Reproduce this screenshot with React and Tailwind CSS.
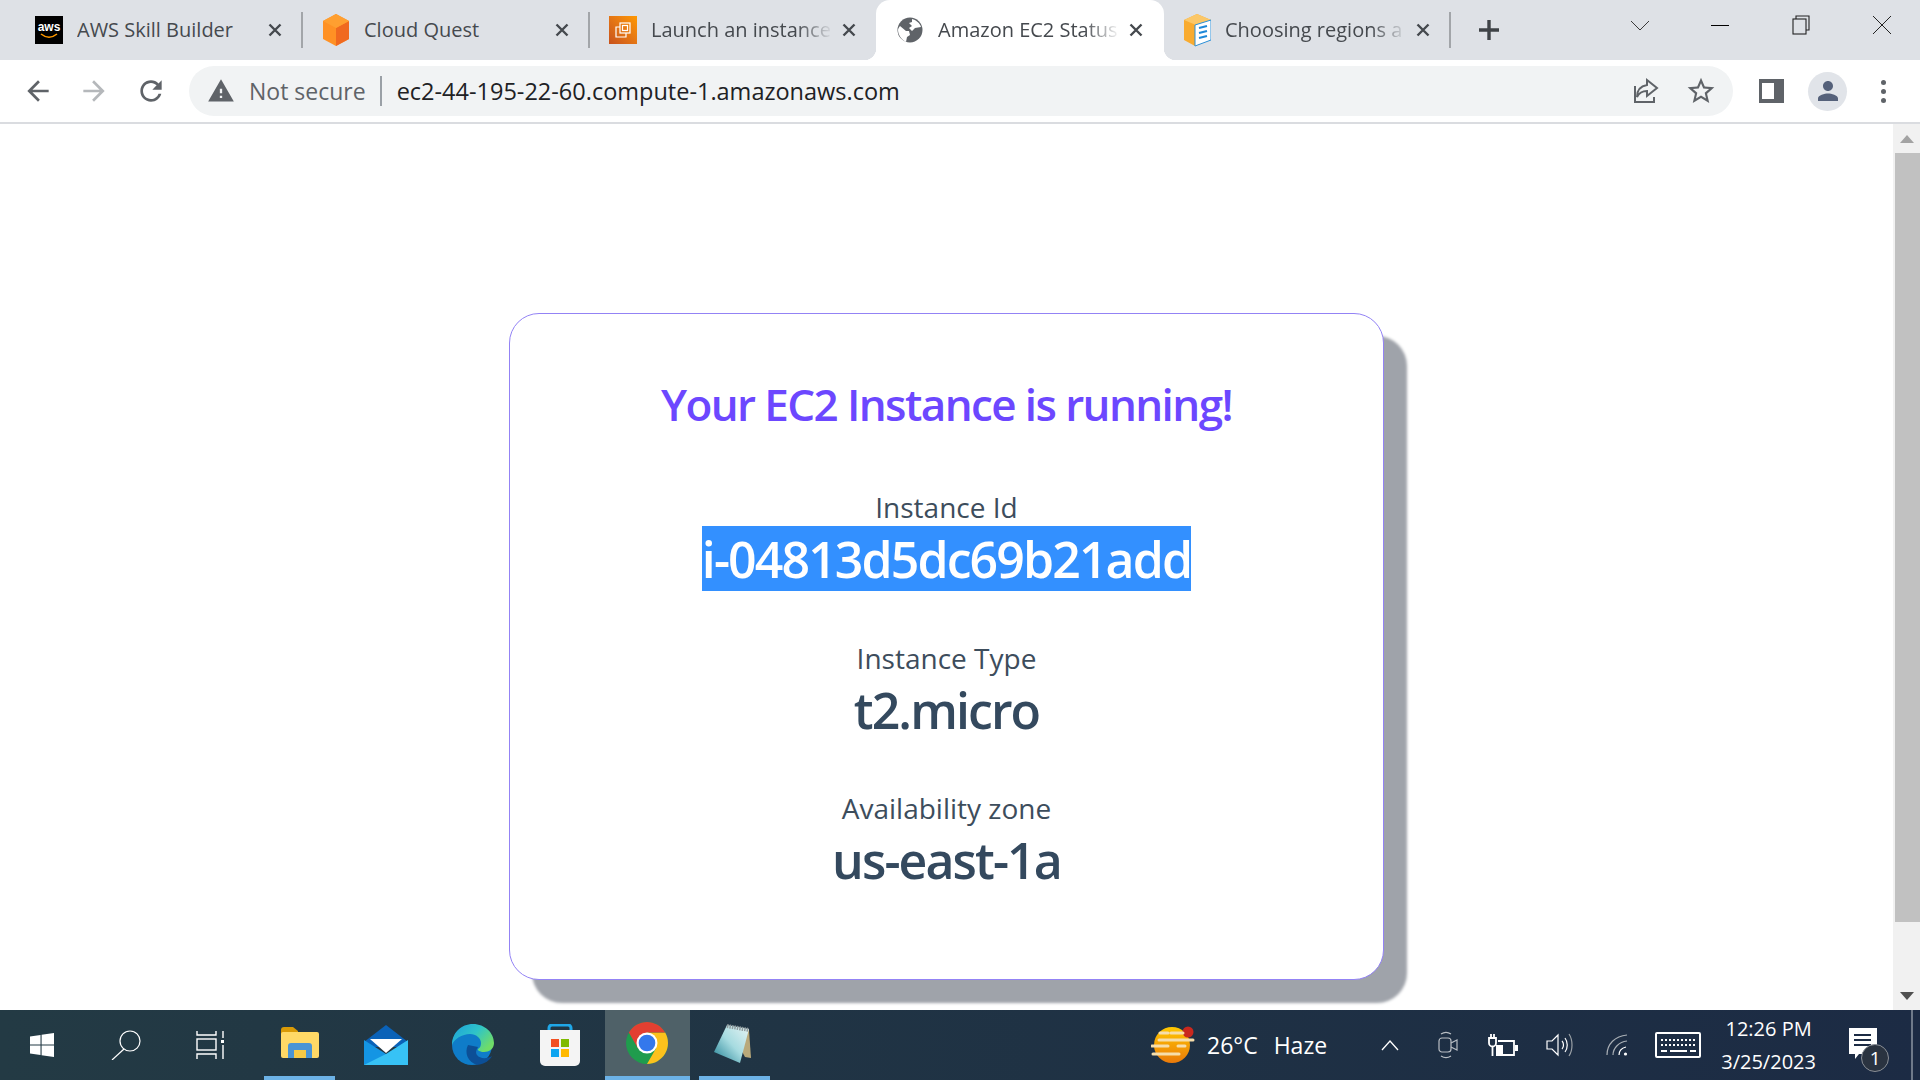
const uiFont = "font-['Open_Sans','Noto_Sans',sans-serif]"

function AwsIcon() {
  return (
    <div className="w-7 h-7 bg-black flex flex-col items-center justify-center shrink-0">
      <span className="text-white text-[12px] font-bold leading-[11px] font-['Liberation_Sans',sans-serif]">aws</span>
      <svg width="20" height="6" viewBox="0 0 20 6"><path d="M2 1c5 4 11 4 16 0" stroke="#f90" strokeWidth="1.6" fill="none" /></svg>
    </div>
  )
}

function CubeIcon() {
  return (
    <svg width="28" height="34" viewBox="0 0 28 34" className="shrink-0">
      <path d="M14 1l13 7v18l-13 7-13-7V8z" fill="#ff9124" />
      <path d="M14 15l13-7v18l-13 7z" fill="#f0691f" />
      <path d="M14 1l13 7-13 7L1 8z" fill="#ff9f30" />
    </svg>
  )
}

function InstanceIcon() {
  return (
    <div className="w-7 h-7 bg-gradient-to-tr from-[#c8511b] to-[#ff9900] flex items-center justify-center shrink-0">
      <svg width="20" height="20" viewBox="0 0 20 20" fill="none" stroke="#fff" strokeWidth="1.2">
        <rect x="7" y="3" width="10" height="10" />
        <rect x="9.5" y="5.5" width="5" height="5" />
        <path d="M7 7H3v10h10v-4" />
      </svg>
    </div>
  )
}

function GlobeIcon() {
  return (
    <svg width="26" height="26" viewBox="0 0 26 26" className="shrink-0">
      <circle cx="13" cy="13" r="12.5" fill="#5f6368" />
      <path d="M3 9l6 5 3 0 1 4-3 2-1 5C5 23 1 18 1 13c0-1 1-3 2-4zM15 2c4 1 8 4 9 8l-6 1-3 3-3-3 3-2-3-3 3-1z" fill="#fff" />
    </svg>
  )
}

function BoxIcon() {
  return (
    <svg width="28" height="34" viewBox="0 0 28 34" className="shrink-0">
      <path d="M14 1L1 7v20l11 6V12l16-5z" fill="#f9ab2f" />
      <path d="M14 1l14 6-15 5L1 7z" fill="#fbc768" />
      <path d="M12 12l16-5v20l-16 6z" fill="#fff" stroke="#2a8fd6" strokeWidth="1" />
      <path d="M16 15l8-2M16 20l8-2M16 25l8-2" stroke="#1e88d8" strokeWidth="2.2" />
    </svg>
  )
}

const tabs = [
  { title: 'AWS Skill Builder', icon: AwsIcon },
  { title: 'Cloud Quest', icon: CubeIcon },
  { title: 'Launch an instance', icon: InstanceIcon, fade: true, noSep: true },
  { title: 'Amazon EC2 Status', icon: GlobeIcon, fade: true, active: true, noSep: true },
  { title: 'Choosing regions a', icon: BoxIcon, fade: true },
]

function Tab({ title, icon: Icon, fade, active, noSep }) {
  return (
    <div className={`relative h-[60px] flex items-center shrink-0 ${active ? 'w-[288px] -ml-[1px] pl-[20px] bg-white rounded-t-[14px]' : 'w-[287px] pl-[19px]'}`}>
      {active && <div className="absolute -left-[12px] bottom-0 w-[12px] h-[12px] bg-[radial-gradient(circle_at_0_0,#dee1e6_12px,#fff_12.5px)]" />}
      {active && <div className="absolute -right-[12px] bottom-0 w-[12px] h-[12px] bg-[radial-gradient(circle_at_100%_0,#dee1e6_12px,#fff_12.5px)]" />}
      <div className="w-[28px] flex justify-center shrink-0"><Icon /></div>
      <div className={`ml-[14px] w-[182px] shrink-0 overflow-hidden whitespace-nowrap text-[20px] text-[#45494e] ${fade ? '[mask-image:linear-gradient(to_right,black_80%,transparent_100%)]' : ''}`}>{title}</div>
      <svg width="14" height="14" viewBox="0 0 14 14" className="ml-[9px] shrink-0"><path d="M1.5 1.5l11 11M12.5 1.5l-11 11" stroke="#45494e" strokeWidth="2.4" /></svg>
      {!noSep && <div className="ml-auto w-[2px] h-[36px] bg-[#a2a5a9]" />}
    </div>
  )
}

function TabStrip() {
  return (
    <div className="h-[60px] bg-[#dee1e6] flex items-center pl-[16px] shrink-0">
      {tabs.map(t => <Tab key={t.title} {...t} />)}
      <svg width="24" height="24" viewBox="0 0 24 24" className="ml-[26px]"><path d="M12 2v20M2 12h20" stroke="#3f4347" strokeWidth="3.4" /></svg>
      <svg width="20" height="12" viewBox="0 0 20 12" className="ml-[129px] -mt-[8px]"><path d="M1 1l9 9 9-9" stroke="#3a3a3a" strokeWidth="1" fill="none" /></svg>
      <div className="ml-[61px] w-[18px] h-[1px] bg-black -mt-[10px]" />
      <svg width="18" height="20" viewBox="0 0 18 20" className="ml-[63px] -mt-[10px]" fill="none" stroke="#222" strokeWidth="1.1"><rect x="1" y="4" width="13" height="15" /><path d="M4 4V1h13v14h-3" /></svg>
      <svg width="20" height="20" viewBox="0 0 20 20" className="ml-[62px] -mt-[10px]"><path d="M1 1l18 18M19 1L1 19" stroke="#222" strokeWidth="1" /></svg>
    </div>
  )
}

function Toolbar() {
  return (
    <div className="h-[64px] bg-white border-b-2 border-[#dadce0] flex items-center pl-[22px] shrink-0">
      <svg width="32" height="32" viewBox="0 0 24 24" fill="#5f6368"><path d="M20 11H7.83l5.59-5.59L12 4l-8 8 8 8 1.41-1.41L7.83 13H20v-2z" /></svg>
      <svg width="32" height="32" viewBox="0 0 24 24" fill="#b5b8bb" className="ml-[24px]"><path d="M12 4l-1.41 1.41L16.17 11H4v2h12.17l-5.58 5.59L12 20l8-8z" /></svg>
      <svg width="32" height="32" viewBox="0 0 24 24" fill="#5f6368" className="ml-[25px]"><path d="M17.65 6.35C16.2 4.9 14.21 4 12 4c-4.42 0-7.99 3.58-7.99 8s3.57 8 7.99 8c3.73 0 6.84-2.55 7.73-6h-2.08c-.82 2.33-3.04 4-5.65 4-3.31 0-6-2.69-6-6s2.69-6 6-6c1.66 0 3.14.69 4.22 1.78L13 11h7V4l-2.35 2.35z" /></svg>
      <div className="ml-[22px] w-[1544px] h-[50px] rounded-full bg-[#f1f3f4] flex items-center pl-[18px]">
        <svg width="28" height="28" viewBox="0 0 24 24" fill="#5f6368"><path d="M1 21h22L12 2 1 21zm12-3h-2v-2h2v2zm0-4h-2v-4h2v4z" /></svg>
        <span className="ml-[14px] text-[23px] text-[#5f6368] leading-none">Not secure</span>
        <div className="ml-[14px] w-[2px] h-[30px] bg-[#9aa0a6]" />
        <span className="ml-[15px] mt-[1px] text-[23.5px] text-[#202124] leading-none">ec2-44-195-22-60.compute-1.amazonaws.com</span>
        <svg width="28" height="28" viewBox="0 0 28 28" fill="none" stroke="#5f6368" strokeWidth="2" className="ml-auto"><path d="M15 3l10 8-10 8v-5c-5 0-8 2-10 6 0-7 4-11 10-12z" /><path d="M3 9v16h19v-5" /></svg>
        <svg width="32" height="32" viewBox="0 0 24 24" fill="#5f6368" className="ml-[25px] mr-[16px]"><path d="M22 9.24l-7.19-.62L12 2 9.19 8.63 2 9.24l5.46 4.73L5.82 21 12 17.27 18.18 21l-1.63-7.03L22 9.24zM12 15.4l-3.76 2.27 1-4.28-3.32-2.88 4.38-.38L12 6.1l1.71 4.04 4.38.38-3.32 2.88 1 4.28L12 15.4z" /></svg>
      </div>
      <div className="ml-[26px] w-[25px] h-[24px] bg-[#5f6368] pl-[3px] py-[4px] pr-[10px]"><div className="w-full h-full bg-white" /></div>
      <div className="ml-[24px] w-[39px] h-[39px] rounded-full bg-[#e1e4e9] flex items-center justify-center">
        <svg width="30" height="30" viewBox="0 0 24 24" fill="#55617a"><path d="M12 12c2.21 0 4-1.79 4-4s-1.79-4-4-4-4 1.79-4 4 1.79 4 4 4zm0 2c-2.67 0-8 1.34-8 4v2h16v-2c0-2.66-5.33-4-8-4z" /></svg>
      </div>
      <div className="ml-[34px] flex flex-col gap-[4px]">
        <div className="w-[5px] h-[5px] rounded-full bg-[#5f6368]" />
        <div className="w-[5px] h-[5px] rounded-full bg-[#5f6368]" />
        <div className="w-[5px] h-[5px] rounded-full bg-[#5f6368]" />
      </div>
    </div>
  )
}

function Info({ label, value, selected, className }) {
  return (
    <div className={`flex flex-col items-center ${className}`}>
      <div className="text-[28px] leading-[38px] text-[#3d4d5c]">{label}</div>
      <div className={`pt-[2px] text-[50px] leading-[63px] tracking-[-1.9px] font-semibold ${selected ? 'bg-[#3390ff] text-white' : 'text-[#34495e]'}`}>{value}</div>
    </div>
  )
}

function StatusCard() {
  return (
    <div className="mx-auto mt-[189px] w-[875px] h-[667px] rounded-[30px] border border-[#9383f5] bg-white shadow-[23px_23px_3px_#9fa3aa] flex flex-col items-center pt-[61px]">
      <h1 className="text-[44px] leading-[58px] tracking-[-1.6px] font-semibold text-[#6c47ff]">Your EC2 Instance is running!</h1>
      <Info label="Instance Id" value="i-04813d5dc69b21add" selected className="mt-[55px]" />
      <Info label="Instance Type" value="t2.micro" className="mt-[48px]" />
      <Info label="Availability zone" value="us-east-1a" className="mt-[47px]" />
    </div>
  )
}

function Scrollbar() {
  return (
    <div className="w-[27px] bg-[#f1f1f1] flex flex-col shrink-0">
      <div className="h-[29px] flex items-center justify-center pl-[1px]">
        <div className="w-0 h-0 border-x-[7px] border-x-transparent border-b-[8px] border-b-[#a3a3a3]" />
      </div>
      <div className="ml-[2px] h-[769px] bg-[#c1c1c1]" />
      <div className="flex-1 flex items-end justify-center pb-[10px] pl-[1px]">
        <div className="w-0 h-0 border-x-[7px] border-x-transparent border-t-[8px] border-t-[#505050]" />
      </div>
    </div>
  )
}

function WindowsIcon() {
  return (
    <svg width="24" height="24" viewBox="0 0 24 24" fill="#fff"><path d="M0 3.5l10.5-1.5v9.4H0zM11.6 1.8L24 0v11.4H11.6zM0 12.6h10.5V22L0 20.5zM11.6 12.6H24V24l-12.4-1.8z" /></svg>
  )
}

function SearchIcon() {
  return (
    <svg width="30" height="30" viewBox="0 0 30 30" fill="none" stroke="#fff" strokeWidth="1.2"><circle cx="19" cy="11" r="10" /><path d="M13 19L1 30" /></svg>
  )
}

function TaskViewIcon() {
  return (
    <svg width="28" height="28" viewBox="0 0 28 28" fill="none" stroke="#fff" strokeWidth="1.4"><path d="M1 0v4h19V0M1 28v-5h19v5" /><rect x="1" y="8" width="19" height="11" /><path d="M27 0v7M27 14v14" /><rect x="25" y="9" width="3" height="3" fill="#fff" stroke="none" /></svg>
  )
}

function ExplorerIcon() {
  return (
    <svg width="38" height="32" viewBox="0 0 38 32">
      <path d="M0 3a3 3 0 0 1 3-3h9l5 4v6H0z" fill="#d99a06" />
      <rect x="0" y="5" width="38" height="26" rx="2" fill="#ffd966" />
      <path d="M7 31V19a3 3 0 0 1 3-3h18a3 3 0 0 1 3 3v12h-6v-8H13v8z" fill="#4a94d4" />
      <rect x="13" y="23" width="12" height="8" fill="#f6c945" />
    </svg>
  )
}

function MailIcon() {
  return (
    <svg width="44" height="40" viewBox="0 0 44 40">
      <path d="M22 0l22 17v5H0v-5z" fill="#0a62b8" />
      <path d="M6 14h32l-16 14z" fill="#fff" />
      <path d="M0 15l22 14v11H0z" fill="#1495e4" />
      <path d="M44 15L22 29 0 40h44z" fill="#37c2f5" />
    </svg>
  )
}

function EdgeIcon() {
  return (
    <svg width="42" height="42" viewBox="0 0 42 42">
      <defs>
        <linearGradient id="edgeTop" x1="0" y1="0" x2="1" y2="0.6"><stop offset="0" stopColor="#1c9fdc" /><stop offset="0.55" stopColor="#2fc4c8" /><stop offset="1" stopColor="#6fdc68" /></linearGradient>
      </defs>
      <circle cx="20" cy="21" r="20" fill="#0f7cc9" />
      <path d="M16 21c-4 8 0 17 9 20 8-1 13-5 15-9-5 3-12 3-15-1-2-3 0-6 1-8z" fill="#0c4f97" />
      <path d="M21 0c12 0 21 9 21 19 0 6-5 9-10 9-4 0-7-2-6-3 2-1 3-3 3-6 0-5-5-9-11-9C10 10 2 15 0 21 0 9 9 0 21 0z" fill="url(#edgeTop)" />
    </svg>
  )
}

function StoreIcon() {
  return (
    <svg width="40" height="42" viewBox="0 0 40 42">
      <path d="M9 12V4a3 3 0 0 1 3-3h16a3 3 0 0 1 3 3v8" fill="none" stroke="#1fa7e8" strokeWidth="3" />
      <path d="M0 6h40v31a5 5 0 0 1-5 5H5a5 5 0 0 1-5-5z" fill="#f4f4f4" />
      <rect x="11" y="15" width="8" height="8" fill="#f25022" />
      <rect x="21" y="15" width="8" height="8" fill="#7fba00" />
      <rect x="11" y="25" width="8" height="8" fill="#0ea5f0" />
      <rect x="21" y="25" width="8" height="8" fill="#ffb900" />
    </svg>
  )
}

function ChromeIcon() {
  return (
    <svg width="42" height="42" viewBox="0 0 48 48">
      <circle cx="24" cy="24" r="24" fill="#1f9c4d" />
      <path d="M44.78 12A24 24 0 0 1 24 48l10.39-18L24 12z" fill="#fcc11d" />
      <path d="M3.22 12A24 24 0 0 1 44.78 12H24L13.61 30z" fill="#e33f31" />
      <circle cx="24" cy="24" r="12" fill="#fff" />
      <circle cx="24" cy="24" r="9.5" fill="#3478ec" />
    </svg>
  )
}

function NotepadIcon() {
  return (
    <svg width="40" height="40" viewBox="0 0 40 40">
      <defs>
        <linearGradient id="padFill" x1="0" y1="1" x2="1" y2="0"><stop offset="0" stopColor="#1f7f93" /><stop offset="0.5" stopColor="#a6dbe0" /><stop offset="1" stopColor="#e8f4f4" /></linearGradient>
      </defs>
      <path d="M15 3l21 4 2 28-6-1z" fill="#b9a97a" />
      <path d="M14 2l22 4-9 34L1 29z" fill="url(#padFill)" />
      <path d="M14 3l22 4" stroke="#8f9a9d" strokeWidth="4" strokeDasharray="1.5 1" />
    </svg>
  )
}

function WeatherIcon() {
  return (
    <svg width="44" height="38" viewBox="0 0 44 38">
      <defs>
        <linearGradient id="sun" x1="0" y1="0" x2="0" y2="1"><stop offset="0" stopColor="#ffc800" /><stop offset="1" stopColor="#ea7a0a" /></linearGradient>
      </defs>
      <circle cx="21" cy="19" r="18" fill="url(#sun)" />
      <circle cx="37" cy="6" r="5.5" fill="#c9281e" />
      <path d="M9 7h8M20 7h12M8 14h34M1 20h16M27 20h7M2 28h26" stroke="#f6deab" strokeWidth="3" strokeLinecap="round" />
    </svg>
  )
}

function TrayIcons() {
  return (
    <div className="flex items-center">
      <svg width="18" height="11" viewBox="0 0 18 11" fill="none" stroke="#fff" strokeWidth="1.3"><path d="M1 10l8-9 8 9" /></svg>
      <svg width="20" height="28" viewBox="0 0 20 28" fill="none" stroke="#b9bec4" strokeWidth="1.2" className="ml-[39px]"><rect x="1" y="7" width="12" height="14" rx="3" /><path d="M13 12l6-3v10l-6-3M3 3c3-2 7-2 10 0M3 25c3 2 7 2 10 0" /></svg>
      <svg width="30" height="22" viewBox="0 0 30 22" fill="none" stroke="#fff" strokeWidth="1.8" className="ml-[30px]"><path d="M1 4h7v5a3.5 3.5 0 0 1-7 0zM3 0v4M6 0v4M4.5 13v9" /><path d="M10 7h16v14H8" /><rect x="8" y="11" width="7" height="10" fill="#fff" stroke="none" /><rect x="27" y="11" width="3" height="6" fill="#fff" stroke="none" /></svg>
      <svg width="27" height="24" viewBox="0 0 27 24" fill="none" stroke="#fff" strokeWidth="1.2" className="ml-[28px]"><path d="M1 8h5l6-6v20l-6-6H1z" /><path d="M16 8c2 2 2 6 0 8M19 5c3 4 3 10 0 14" /><path d="M23 1c4 6 4 16 0 22" stroke="#9aa0a6" /></svg>
      <svg width="22" height="22" viewBox="0 0 22 22" fill="none" stroke="#aab0b6" strokeWidth="1.2" className="ml-[33px]"><path d="M1 21C1 10 9 2 21 1M7 21c0-7 6-13 14-14" /><path d="M13 21c0-4 3-7 7-8" stroke="#fff" /><circle cx="19.5" cy="20" r="1.6" fill="#fff" stroke="none" /></svg>
      <svg width="46" height="26" viewBox="0 0 46 26" fill="none" stroke="#fff" className="ml-[27px]"><rect x="1" y="1" width="44" height="24" rx="1" strokeWidth="2" /><path d="M6 8h34M6 13h34" strokeWidth="2" strokeDasharray="2 2" /><path d="M6 19h6M15 19h17M35 19h6" strokeWidth="2" /></svg>
    </div>
  )
}

function Taskbar() {
  return (
    <div className="relative h-[70px] bg-gradient-to-r from-[#233a44] to-[#1c2b44] flex items-center shrink-0 text-white">
      <div className="ml-[30px] w-[24px] flex justify-center"><WindowsIcon /></div>
      <div className="ml-[57px]"><SearchIcon /></div>
      <div className="ml-[55px]"><TaskViewIcon /></div>
      <div className="ml-[40px] w-[71px] h-full flex items-center justify-center border-b-4 border-[#6cb2e6]"><ExplorerIcon /></div>
      <div className="ml-[15px] w-[71px] flex justify-center"><MailIcon /></div>
      <div className="ml-[16px] w-[71px] flex justify-center"><EdgeIcon /></div>
      <div className="w-[71px] ml-[16px] flex justify-center"><StoreIcon /></div>
      <div className="ml-[10px] w-[85px] h-full flex items-center justify-center bg-[#4f6168] border-b-4 border-[#6cb2e6] pr-[2px]"><ChromeIcon /></div>
      <div className="ml-[9px] w-[71px] h-full flex items-center justify-center border-b-4 border-[#6cb2e6] pr-[4px]"><NotepadIcon /></div>
      <div className="ml-[381px]"><WeatherIcon /></div>
      <span className="ml-[12px] text-[23px] whitespace-nowrap">26°C</span>
      <span className="ml-[16px] text-[23px] whitespace-nowrap">Haze</span>
      <div className="ml-[54px]"><TrayIcons /></div>
      <div className="ml-[21px] w-[93px] flex flex-col items-center text-[20px] leading-[33px] whitespace-nowrap">
        <span>12:26 PM</span>
        <span>3/25/2023</span>
      </div>
      <div className="relative ml-[34px]">
        <svg width="28" height="34" viewBox="0 0 28 34"><path d="M0 0h28v26H10l-4 5v-5H0z" fill="#fff" /><path d="M5 7h17M5 12h17M5 17h17" stroke="#1c2b44" strokeWidth="2" /></svg>
        <div className="absolute left-[12px] top-[16px] w-[28px] h-[28px] rounded-full bg-[#2a3340] border border-[#8a8f96] flex items-center justify-center text-[19px] leading-none">1</div>
      </div>
      <div className="absolute left-[1911px] top-0 w-[2px] h-full bg-[#6f7a8a]" />
    </div>
  )
}

export default function App() {
  return (
    <div className={`w-[1920px] h-[1080px] overflow-hidden flex flex-col bg-white ${uiFont}`}>
      <TabStrip />
      <Toolbar />
      <div className="flex-1 flex min-h-0">
        <main className="flex-1 min-w-0"><StatusCard /></main>
        <Scrollbar />
      </div>
      <Taskbar />
    </div>
  )
}
